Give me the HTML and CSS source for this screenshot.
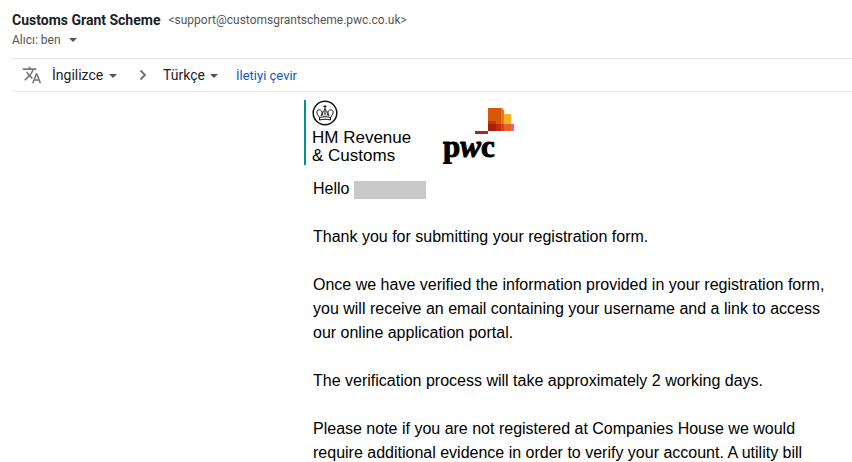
FILE: index.html
```
<!DOCTYPE html>
<html lang="tr">
<head>
    <meta charset="UTF-8">
    <meta name="viewport" content="width=device-width, initial-scale=1.0">
    <title>Customs Grant Scheme</title>
    <link rel="stylesheet" href="styles.css">
</head>
<body>

<header class="sender">
    <h1><span class="name">Customs Grant Scheme</span> <span class="address">&lt;support@customsgrantscheme.pwc.co.uk&gt;</span></h1>
    <button class="recipient" type="button">Alıcı: ben <span class="arrow"></span></button>
</header>

<div class="translate">
    <svg class="translate-icon" viewBox="0 0 24 24" aria-hidden="true">
        <path d="M12.87 15.07l-2.54-2.51.03-.03c1.74-1.94 2.98-4.17 3.71-6.53H17V4h-7V2H8v2H1v1.99h11.17C11.5 7.92 10.44 9.75 9 11.35 8.07 10.32 7.3 9.19 6.69 8h-2c.73 1.63 1.73 3.17 2.98 4.56l-5.09 5.02L4 19l5-5 3.11 3.11.76-2.04zM18.5 10h-2L12 22h2l1.12-3h4.75L21 22h2l-4.5-12zm-2.62 7l1.62-4.33L19.12 17h-3.24z"/>
    </svg>
    <div class="language">
        <select aria-label="Kaynak dil"><option>İngilizce</option></select>
        <span class="arrow"></span>
    </div>
    <svg class="chevron" viewBox="0 0 8 12" aria-hidden="true">
        <path d="M1.5 1.5L6 6l-4.5 4.5"/>
    </svg>
    <div class="language">
        <select aria-label="Hedef dil"><option>Türkçe</option></select>
        <span class="arrow"></span>
    </div>
    <a href="#">İletiyi çevir</a>
</div>

<main class="message" lang="en">
    <div class="logos">
        <div class="hmrc">
            <svg class="crest" viewBox="0 0 26 26" aria-hidden="true">
                <circle cx="13" cy="13" r="11.8"/>
                <!-- crown arches -->
                <path class="crown" d="M7.5 17.5C6 15 4.3 13.5 5 11.3c.8-2 4-2 4.8.2.4 1.5-.2 3-.8 4.5M18.5 17.5C20 15 21.7 13.5 21 11.3c-.8-2-4-2-4.8.2-.4 1.5.2 3 .8 4.5M13 8.5v7M10.8 15.5c-.5-3 .2-4.5 2.2-6 2 1.5 2.7 3 2.2 6"/>
                <!-- band and cross -->
                <path class="crown" d="M7.5 17.5c3.5-1 7.5-1 11 0V20c-3.5-1-7.5-1-11 0zM13 5v4M11.5 6.5h3"/>
            </svg>
            <div class="hmrc-name">HM Revenue<br>&amp; Customs</div>
        </div>
        <svg class="pwc" viewBox="0 0 76 60" role="img" aria-label="pwc">
            <path fill="#b3241c" d="M35 27h13v3H35z"/>
            <path fill="#d85604" d="M48 4h13v23H48z"/>
            <path fill="#e8893f" d="M61 4h2v3h-2z"/>
            <path fill="#e8791f" d="M61 6h3v14h-3z"/>
            <path fill="#f3b122" d="M64 10h7v10h-7z"/>
            <path fill="#c33a08" d="M48 17h8v4h-8z"/>
            <path fill="#a82008" d="M48 20h8v7h-8z"/>
            <path fill="#c42a0a" d="M56 20h5v7h-5z"/>
            <path fill="#d9421c" d="M61 20h3v7h-3z"/>
            <path fill="#e5622a" d="M64 20h7v7h-7z"/>
            <path fill="#e4609c" d="M71 20h3v7h-3z"/>
            <text x="3" y="53">p<tspan class="italic">w</tspan>c</text>
        </svg>
    </div>
    <p>Hello <span class="redacted"></span></p>
    <p>Thank you for submitting your registration form.</p>
    <p>Once we have verified the information provided in your registration form, you will receive an email containing your username and a link to access our online application portal.</p>
    <p>The verification process will take approximately 2 working days.</p>
    <p>Please note if you are not registered at Companies House we would require additional evidence in order to verify your account. A utility bill</p>
</main>

</body>
</html>
```

FILE: styles.css
```
* {
    box-sizing: border-box;
}

body {
    margin: 0;
    padding: 10px 0 0 12px;
    font-family: Roboto, Arial, sans-serif;
    background-color: #fff;
    color: #202124;
    overflow: hidden;
}

.sender {
    padding-bottom: 8px;
}

h1 {
    display: flex;
    gap: 8px;
    margin: 0;
    font-size: 14px;
    line-height: 20px;
    white-space: nowrap;
}

.address {
    font-size: 12px;
    font-weight: 400;
    color: #555;
}

button {
    display: flex;
    align-items: center;
    padding: 0;
    border: none;
    background: none;
    font-family: inherit;
    cursor: pointer;
}

.recipient {
    gap: 8px;
    font-size: 12px;
    line-height: 20px;
    color: #555;
}

.arrow {
    border: 4px solid transparent;
    border-top-color: #555;
    border-bottom: none;
}

.translate {
    display: flex;
    align-items: center;
    height: 34px;
    padding-left: 10px;
    border-top: 1px solid #e8e8e8;
    border-bottom: 1px solid #e8e8e8;
    font-size: 14px;
}

.translate-icon {
    width: 20px;
    height: 20px;
    margin-right: 10px;
    fill: #777;
}

.language {
    position: relative;
}

.language select {
    appearance: none;
    padding: 0 13px 0 0;
    border: none;
    background: none;
    font: inherit;
    color: #222;
    cursor: pointer;
}

.language .arrow {
    position: absolute;
    right: 0;
    top: 7px;
    pointer-events: none;
}

.chevron {
    width: 8px;
    height: 12px;
    margin: 0 16px 0 22px;
    fill: none;
    stroke: #777;
    stroke-width: 2;
}

.translate a {
    margin-left: 18px;
    font-size: 13px;
    color: #15c;
    text-decoration: none;
}

.message {
    max-width: 824px;
    padding: 8px 0 0 292px;
    font-family: "Liberation Sans", Arial, sans-serif;
    font-size: 16px;
    line-height: 24px;
    color: #000;
}

.logos {
    display: flex;
    align-items: flex-start;
    gap: 29px;
    padding-bottom: 12px;
}

.hmrc {
    padding-left: 6px;
    border-left: 2px solid #009390;
}

.hmrc-name {
    font-size: 17px;
    line-height: 18px;
}

.crest {
    display: block;
    width: 26px;
    height: 26px;
    margin-bottom: 3px;
    fill: none;
    stroke: #111;
    stroke-width: 1.5;
}

.crown {
    stroke-width: 1;
}

.pwc {
    width: 76px;
    height: 60px;
    margin-top: 4px;
}

.pwc text {
    font-family: "Liberation Serif", serif;
    font-size: 31px;
    font-weight: 700;
    stroke: #000;
    stroke-width: 1;
}

.italic {
    font-style: italic;
}

p {
    margin: 0 0 24px;
    padding-left: 9px;
}

p:last-child {
    margin-bottom: 0;
}

.redacted {
    display: inline-block;
    width: 72px;
    height: 18px;
    background-color: #c9c9c9;
    vertical-align: middle;
}
```
